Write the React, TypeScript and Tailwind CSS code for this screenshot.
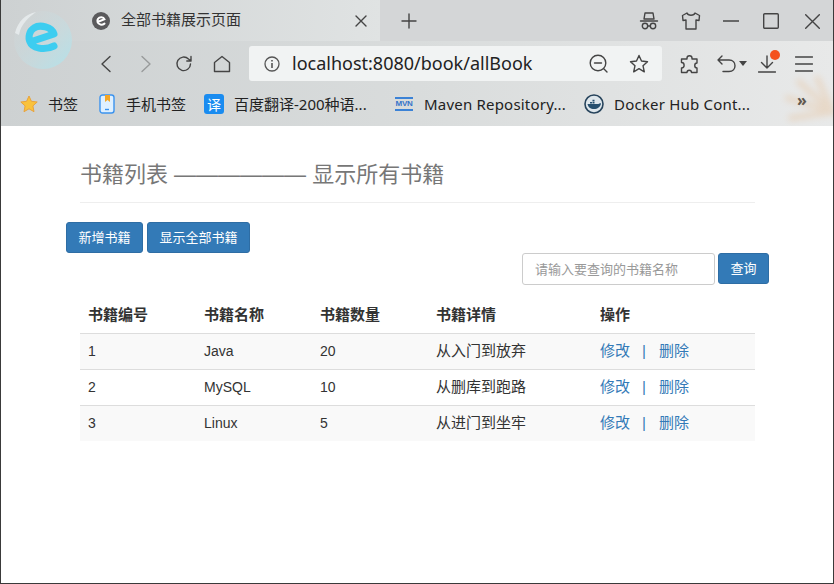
import React from "react";

const stack = { fontFamily: '"Liberation Sans","Noto Sans CJK SC",sans-serif' };
const ui = { fontFamily: '"Noto Sans","Noto Sans CJK SC",sans-serif' };
const S = ({ w, h, children, cls = "" }: { w: number; h: number; children: React.ReactNode; cls?: string }) => (
  <svg width={w} height={h} viewBox={`0 0 ${w} ${h}`} fill="none" stroke="#444" strokeWidth={1.4} strokeLinecap="round" strokeLinejoin="round" className={`shrink-0 ${cls}`}>
    {children}
  </svg>
);

function Logo() {
  return (
    <svg width="62" height="62" viewBox="0 0 62 62" className="absolute left-[11px] top-[9px]">
      <defs>
        <linearGradient id="g" x1="0.1" y1="0.1" x2="0.9" y2="0.9">
          <stop offset="0" stopColor="#d2d6d7" stopOpacity="0.3" />
          <stop offset="0.6" stopColor="#c3dde2" stopOpacity="0.6" />
          <stop offset="1" stopColor="#b4e2ea" stopOpacity="0.85" />
        </linearGradient>
      </defs>
      <circle cx="31" cy="31" r="29" fill="url(#g)" />
      <path d="M3 24 C6 12 14 5 24 3 C16 9 9 15 7 26 Z" fill="#eef2f3" opacity="0.7" />
      <path d="M18 33 L42 25 C40 18 28 15 22 19 C17 22 16 29 18 33 C20 39 32 42 42 37" fill="none" stroke="#3dcdf0" strokeWidth="7" strokeLinecap="round" strokeLinejoin="round" />
    </svg>
  );
}

function Chrome() {
  return (
    <div className="relative h-[126px] shrink-0 overflow-hidden bg-gradient-to-r from-[#cdd1d2] via-[#d9dcdc] to-[#e8e9e9]">
      <Logo />
      <div className="flex h-[41px]">
        <div className="flex w-[379px] shrink-0 items-center pl-[91px] pr-[12px] bg-gradient-to-r from-[#cdd1d2] to-[#e0e3e3]">
          <svg width="18" height="18" viewBox="0 0 18 18" className="mr-[11px] shrink-0">
            <circle cx="9" cy="9" r="9" fill="#5a5a5c" />
            <path d="M5.5 10 L12.5 7.3 C11.5 4.8 7.5 4.8 6 6.8 C5 8.2 5 9 5.5 10 C6.5 13 10 13.3 12.5 11.6" fill="none" stroke="#fff" strokeWidth="2" strokeLinecap="round" />
          </svg>
          <span className="flex-1 text-[15px] text-[#333]">全部书籍展示页面</span>
          <S w={14} h={14}><path d="M2 2 L12 12 M12 2 L2 12" /></S>
        </div>
        <div className="flex flex-1 items-center bg-[#d4d6d7]">
          <S w={16} h={16} cls="ml-[21px]"><path d="M8 1 V15 M1 8 H15" /></S>
          <div className="ml-auto mr-[13px] mt-[1px] flex items-center">
            <S w={20} h={20}>
              <path d="M6 2 H14 L15 8 H5 Z M1.5 10 H18.5" />
              <circle cx="6" cy="15" r="2.7" /><circle cx="14" cy="15" r="2.7" /><path d="M8.7 15 H11.3" />
            </S>
            <S w={20} h={20} cls="ml-[22px]">
              <path d="M6 2 L1.5 4.5 L2 9.5 L5 9 V18 H15 V9 L18 9.5 L18.5 4.5 L14 2 C13 5 7 5 6 2 Z" />
            </S>
            <S w={16} h={2} cls="ml-[22px]"><path d="M0 1 H16" /></S>
            <S w={16} h={16} cls="ml-[24px]"><rect x="0.7" y="0.7" width="14.6" height="14.6" rx="1" /></S>
            <S w={15} h={15} cls="ml-[26px]"><path d="M0.7 0.7 L14.3 14.3 M14.3 0.7 L0.7 14.3" /></S>
          </div>
        </div>
      </div>
      <div className="flex h-[43px] items-center pl-[99px] pt-[2px]">
        <S w={12} h={18}><path d="M10 1.5 L2 9 L10 16.5" /></S>
        <S w={12} h={18} cls="ml-[28px] opacity-40"><path d="M2 1.5 L10 9 L2 16.5" /></S>
        <S w={18} h={18} cls="ml-[23px]"><path d="M15.5 9 A6.8 6.8 0 1 1 13.5 4 L16 6 M16 1.5 V6 H11.8" /></S>
        <S w={18} h={18} cls="ml-[20px]"><path d="M1.5 7.5 L9 1.5 L16.5 7.5 V16.5 H1.5 Z" /></S>
        <div className="ml-[18px] flex h-[35px] w-[413px] items-center rounded-[3px] bg-[#f1f3f3] pl-[15px] pr-[13px]">
          <svg width="16" height="16" viewBox="0 0 16 16" fill="none" className="shrink-0">
            <circle cx="8" cy="8" r="7" stroke="#555" strokeWidth="1.3" />
            <path d="M8 7 V12 M8 4 V5.4" stroke="#555" strokeWidth="1.6" />
          </svg>
          <span className="ml-[12px] flex-1 whitespace-nowrap text-[18px] text-[#222]" style={ui}>localhost:8080/book/allBook</span>
          <S w={19} h={19}><circle cx="9" cy="9" r="7.8" /><path d="M5.5 9 H12.5 M15 15 L18 18" /></S>
          <S w={20} h={20} cls="ml-[21px]"><path d="M10 1.5 L12.5 7 L18.5 7.7 L14 11.7 L15.3 17.8 L10 14.7 L4.7 17.8 L6 11.7 L1.5 7.7 L7.5 7 Z" /></S>
        </div>
        <S w={20} h={20} cls="ml-[18px]">
          <path d="M7 4 C7 1 12 1 12 4 V5 H17 V9 C14 9 14 14 17 14 V18.5 H11.5 C11.5 15.5 7 15.5 7 18.5 H1.5 V14 C5 14 5 8.5 1.5 8.5 V5 H7 Z" />
        </S>
        <S w={20} h={18} cls="ml-[17px]"><path d="M5 1 L1 5 L5 9 M1 5 H12 C20 5 20 16.5 12 16.5 H6" /></S>
        <svg width="8" height="5" viewBox="0 0 8 5" className="ml-[2px] shrink-0"><path d="M0 0 H8 L4 5 Z" fill="#444" /></svg>
        <div className="relative ml-[11px] h-[20px] w-[18px] shrink-0">
          <S w={18} h={20}><path d="M9 2 V14 M3.5 8.5 L9 14 L14.5 8.5 M0.5 18 H17.5" /></S>
          <span className="absolute left-[12px] -top-[4px] h-[10px] w-[10px] rounded-full bg-[#f4511e]" />
        </div>
        <S w={18} h={16} cls="ml-[19px]"><path d="M0.5 1 H17.5 M0.5 8 H17.5 M0.5 15 H17.5" /></S>
      </div>
      <div className="relative flex h-[42px] items-center whitespace-nowrap pb-[2px] pl-[19px] text-[15px] text-[#222]" style={ui}>
        <svg width="18" height="18" viewBox="0 0 18 18" className="shrink-0"><path d="M9 1 L11.4 6.3 L17.2 7 L12.9 10.9 L14 16.7 L9 13.8 L4 16.7 L5.1 10.9 L0.8 7 L6.6 6.3 Z" fill="#f9c23c" stroke="#e8a33d" strokeWidth="1" /></svg>
        <span className="ml-[10px]">书签</span>
        <svg width="16" height="20" viewBox="0 0 16 20" className="ml-[21px] shrink-0">
          <rect x="1" y="1" width="14" height="18" rx="2.5" fill="#dff0ff" stroke="#3b93ee" strokeWidth="1.4" />
          <path d="M6 1 H11 V8 L8.5 6 L6 8 Z" fill="#f5a623" /><path d="M6 15.5 H10" stroke="#3b93ee" strokeWidth="1.4" />
        </svg>
        <span className="ml-[11px]">手机书签</span>
        <div className="ml-[18px] flex h-[20px] w-[20px] shrink-0 items-center justify-center rounded-[3px] bg-[#1a8cf0] text-[14px] text-white">译</div>
        <span className="ml-[10px] w-[161px] shrink-0">百度翻译-200种语...</span>
        <div className="w-[18px] shrink-0 text-center font-bold text-[8px] leading-[10px] tracking-[-0.2px] text-[#3573c9]" style={stack}>
          <div className="h-[2px] bg-[#3b82d6]" />MVN<div className="h-[2px] bg-[#3b82d6]" />
        </div>
        <span className="ml-[11px] w-[160px] shrink-0 tracking-[0.2px]">Maven Repository...</span>
        <svg width="20" height="20" viewBox="0 0 20 20" className="shrink-0">
          <circle cx="10" cy="10" r="9" fill="#dfe7ec" stroke="#27445c" strokeWidth="1.6" />
          <path d="M3.5 10 H14.5 C15.5 9 16.5 9 17 9.5 C16.5 13 13.5 15 10 15 C6.5 15 4 13 3.5 10 Z" fill="#27506f" />
          <path d="M6 8 H8 V9.5 H6 Z M8.5 8 H10.5 V9.5 H8.5 Z M8.5 5.8 H10.5 V7.4 H8.5 Z" fill="#27506f" />
        </svg>
        <span className="ml-[10px] tracking-[0.2px]">Docker Hub Cont...</span>
        <span className="absolute left-[796px] top-[4px] text-[16px] font-bold text-[#444]">»</span>
        <svg width="50" height="50" viewBox="0 0 50 50" className="absolute left-[784px] top-[-8px] opacity-30 blur-[3px]">
          <path d="M48 36 L2 22 M48 36 L14 6 M48 36 L32 2 M48 36 L6 42" stroke="#e7b47f" strokeWidth="6" strokeLinecap="round" />
        </svg>
      </div>
    </div>
  );
}

const rows = [
  ["1", "Java", "20", "从入门到放弃"],
  ["2", "MySQL", "10", "从删库到跑路"],
  ["3", "Linux", "5", "从进门到坐牢"],
];
const cols = "grid grid-cols-[116px_116px_116px_164px_163px]";
const Btn = ({ children, cls = "" }: { children: React.ReactNode; cls?: string }) => (
  <button className={`h-[31px] rounded-[3px] border border-[#2e6da4] bg-[#337ab7] text-[13px] text-white ${cls}`}>{children}</button>
);

export default function App() {
  return (
    <div className="flex h-[584px] w-[834px] flex-col overflow-hidden border-x border-b border-[#3a3a3a] bg-white text-[14px] text-[#333]" style={stack}>
      <Chrome />
      <main className="pl-[65px]">
        <div className="ml-[14px] mt-[32px] h-[45px] w-[675px] whitespace-nowrap border-b border-[#eee] text-[22px] leading-[33px] text-[#777]">
          书籍列表 —————— 显示所有书籍
        </div>
        <div className="mt-[19px] flex gap-[4px]">
          <Btn cls="w-[77px]">新增书籍</Btn>
          <Btn cls="w-[103px]">显示全部书籍</Btn>
        </div>
        <div className="flex h-[32px] w-[703px] justify-end gap-[3px]">
          <input
            readOnly
            placeholder="请输入要查询的书籍名称"
            className="h-[32px] w-[193px] rounded-[3px] border border-[#ccc] px-[12px] text-[13px] outline-none placeholder:text-[#999]"
          />
          <Btn cls="w-[51px]">查询</Btn>
        </div>
        <div className="ml-[14px] mt-[13px] w-[675px]">
          <div className={`${cols} h-[36px] items-center border-b border-[#ddd] pl-[8px] text-[15px] font-bold`}>
            <span>书籍编号</span><span>书籍名称</span><span>书籍数量</span><span>书籍详情</span><span>操作</span>
          </div>
          {rows.map((r, i) => (
            <div key={r[0]} className={`${cols} items-center pl-[8px] ${i > 0 ? "h-[36px] border-t border-[#ddd]" : "h-[35px]"} ${i % 2 === 0 ? "bg-[#f9f9f9]" : ""}`}>
              <span>{r[0]}</span><span>{r[1]}</span><span>{r[2]}</span><span className="text-[15px]">{r[3]}</span>
              <span className="flex text-[15px] text-[#337ab7]">
                <span>修改</span><span className="ml-[12px] w-[17px] text-[#337ab7]">|</span><span>删除</span>
              </span>
            </div>
          ))}
        </div>
      </main>
    </div>
  );
}
